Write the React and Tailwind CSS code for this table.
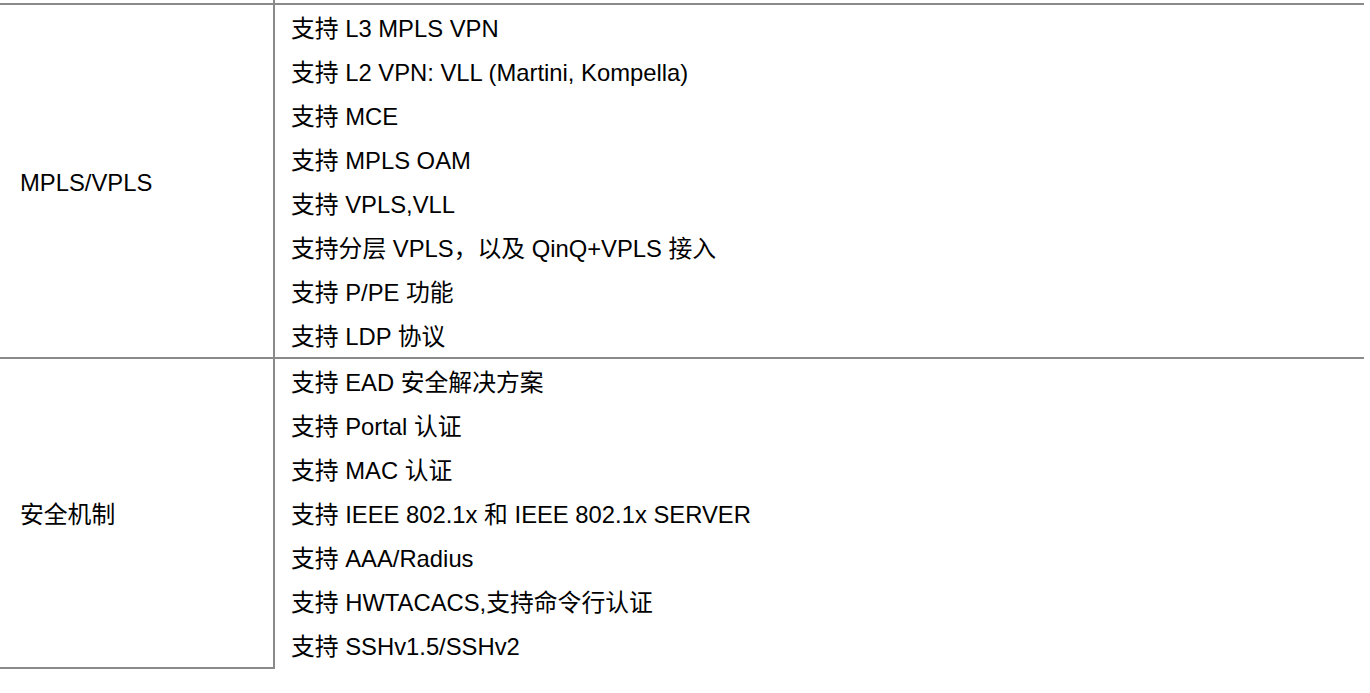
export default function App() {
  const sections = [
    {
      title: "MPLS/VPLS",
      items: [
        "支持 L3 MPLS VPN",
        "支持 L2 VPN: VLL (Martini, Kompella)",
        "支持 MCE",
        "支持 MPLS OAM",
        "支持 VPLS,VLL",
        "支持分层 VPLS，以及 QinQ+VPLS 接入",
        "支持 P/PE 功能",
        "支持 LDP 协议",
      ],
    },
    {
      title: "安全机制",
      items: [
        "支持 EAD 安全解决方案",
        "支持 Portal 认证",
        "支持 MAC 认证",
        "支持 IEEE 802.1x 和 IEEE 802.1x SERVER",
        "支持 AAA/Radius",
        "支持 HWTACACS,支持命令行认证",
        "支持 SSHv1.5/SSHv2",
      ],
    },
  ];

  return (
    <div
      className="min-h-screen bg-white text-black text-[23.8px]"
      style={{ fontFamily: '"Liberation Sans", "Noto Sans CJK SC", sans-serif' }}
    >
      <div className="w-[1364px]">
        {/* stub of the vertical rule above the top border */}
        <div className="h-[3px] w-[275px] border-r-2 border-[#8a8a8a]" />
        <div className="h-[2px] bg-[#8a8a8a]" />

        {sections.map((s, i) => (
          <div key={i}>
            {i > 0 && <div className="h-[2px] bg-[#8a8a8a]" />}
            <div className="flex">
              <div className="w-[275px] shrink-0 border-r-2 border-[#8a8a8a] flex items-center pl-5 pt-[4px]">
                {s.title}
              </div>
              <div className="flex-1 pl-4">
                {s.items.map((t, j) => (
                  <div key={j} className="h-[44px] pt-[4px] flex items-center whitespace-nowrap">
                    {t}
                  </div>
                ))}
              </div>
            </div>
          </div>
        ))}

        <div className="h-[2px] w-[275px] bg-[#8a8a8a]" />
      </div>
    </div>
  );
}
